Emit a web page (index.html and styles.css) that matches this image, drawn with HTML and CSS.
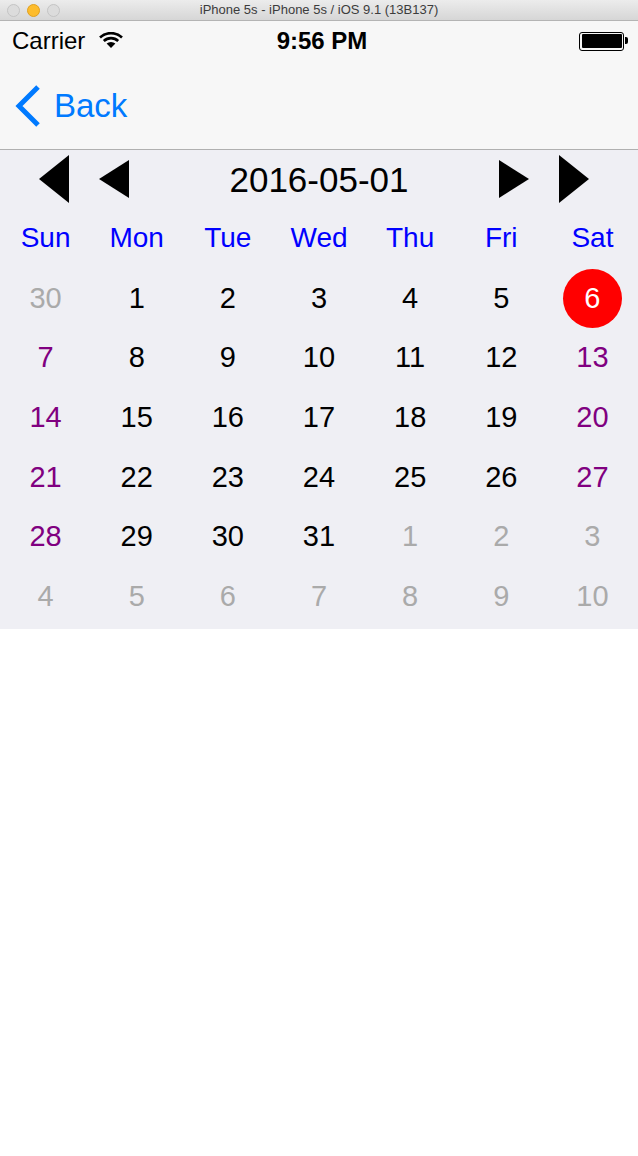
FILE: index.html
```html
<!DOCTYPE html>
<html>
<head>
<meta charset="utf-8">
<link rel="stylesheet" href="styles.css">
</head>
<body>
<div class="window">
  <div class="titlebar">
    <div class="lights">
      <span class="light"></span>
      <span class="light yellow"></span>
      <span class="light"></span>
    </div>
    <div class="title">iPhone 5s - iPhone 5s / iOS 9.1 (13B137)</div>
  </div>
  <div class="statusbar">
    <div class="carrier">
      <span>Carrier</span>
      <svg class="wifi" width="24" height="16" viewBox="0 0 24 16">
        <path d="M1 5.5 A16 16 0 0 1 23 5.5" fill="none" stroke="#000" stroke-width="2.6"/>
        <path d="M4.8 9 A10.5 10.5 0 0 1 19.2 9" fill="none" stroke="#000" stroke-width="2.6"/>
        <path d="M12 16 L7.6 11.6 A6.5 6.5 0 0 1 16.4 11.6 Z" fill="#000"/>
      </svg>
    </div>
    <div class="time">9:56 PM</div>
    <div class="battery"><span class="battery-fill"></span><span class="battery-tip"></span></div>
  </div>
  <div class="navbar">
    <div class="back">
      <svg class="chevron" width="28" height="42" viewBox="0 0 28 42">
        <path d="M24 2 L5 21 L24 40" fill="none" stroke="#007aff" stroke-width="5"/>
      </svg>
      <span>Back</span>
    </div>
  </div>
  <div class="calendar">
    <div class="cal-head">
      <span class="tri left big"></span>
      <span class="tri left small"></span>
      <div class="month">2016-05-01</div>
      <span class="tri right small"></span>
      <span class="tri right big"></span>
    </div>
    <div class="grid">
      <div class="wd">Sun</div><div class="wd">Mon</div><div class="wd">Tue</div><div class="wd">Wed</div><div class="wd">Thu</div><div class="wd">Fri</div><div class="wd">Sat</div>

      <div class="day other">30</div><div class="day">1</div><div class="day">2</div><div class="day">3</div><div class="day">4</div><div class="day">5</div><div class="day sel"><span class="circle">6</span></div>

      <div class="day wk">7</div><div class="day">8</div><div class="day">9</div><div class="day">10</div><div class="day">11</div><div class="day">12</div><div class="day wk">13</div>

      <div class="day wk">14</div><div class="day">15</div><div class="day">16</div><div class="day">17</div><div class="day">18</div><div class="day">19</div><div class="day wk">20</div>

      <div class="day wk">21</div><div class="day">22</div><div class="day">23</div><div class="day">24</div><div class="day">25</div><div class="day">26</div><div class="day wk">27</div>

      <div class="day wk">28</div><div class="day">29</div><div class="day">30</div><div class="day">31</div><div class="day other">1</div><div class="day other">2</div><div class="day other">3</div>

      <div class="day other">4</div><div class="day other">5</div><div class="day other">6</div><div class="day other">7</div><div class="day other">8</div><div class="day other">9</div><div class="day other">10</div>
    </div>
  </div>
</div>
</body>
</html>
```

FILE: styles.css
```css
* { box-sizing: border-box; }
html, body { margin: 0; padding: 0; background: #fff; }
body { font-family: "Liberation Sans", Arial, sans-serif; width: 638px; height: 1156px; overflow: hidden; }

.titlebar {
  height: 21px;
  background: linear-gradient(#ececec, #d6d6d6);
  border-bottom: 1px solid #b4b4b4;
  display: flex;
  align-items: center;
  position: relative;
}
.lights { display: flex; gap: 7px; padding-left: 7px; }
.light {
  width: 13px; height: 13px; border-radius: 50%;
  background: #dcdcdc; border: 1px solid #c4c4c4;
}
.light.yellow { background: #fdbc2c; border-color: #e0a020; }
.title {
  position: absolute; left: 0; right: 0; top: 2px;
  text-align: center; font-size: 13px; color: #3c3c3c;
  font-family: "Liberation Sans", Arial, sans-serif;
}

.statusbar {
  height: 40px;
  background: #f7f7f7;
  display: flex;
  align-items: center;
  justify-content: space-between;
  padding: 0 10px 0 12px;
  position: relative;
}
.carrier { display: flex; align-items: center; gap: 14px; font-size: 24px; color: #000; }
.wifi { margin-top: -2px; }
.time {
  position: absolute; left: 0; right: 0; text-align: center;
  font-size: 24px; font-weight: bold; padding-left: 6px;
}
.battery {
  width: 45px; height: 19px; border: 1.5px solid #000; border-radius: 3px;
  padding: 1.5px; position: relative; margin-right: 4px;
}
.battery-fill { display: block; width: 100%; height: 100%; background: #000; border-radius: 1px; }
.battery-tip {
  position: absolute; right: -5px; top: 4.5px; width: 3px; height: 7px;
  background: #000; border-radius: 0 2px 2px 0;
}

.navbar {
  height: 89px;
  background: #f7f7f7;
  border-bottom: 1px solid #b0b0b0;
  display: flex;
  align-items: center;
  padding-left: 14px;
}
.back { display: flex; align-items: center; gap: 12px; color: #007aff; font-size: 33px; margin-top: 2px; }
.chevron { display: block; }

.calendar { background: #efeff4; padding-bottom: 4px; }
.cal-head {
  height: 58px;
  display: flex;
  align-items: center;
  padding: 0 49px 0 39px;
  gap: 30px;
}
.tri { width: 0; height: 0; flex: none; }
.tri.left.big { border-top: 24.5px solid transparent; border-bottom: 24.5px solid transparent; border-right: 30px solid #000; }
.tri.left.small { border-top: 19.5px solid transparent; border-bottom: 19.5px solid transparent; border-right: 30px solid #000; }
.tri.right.big { border-top: 24.5px solid transparent; border-bottom: 24.5px solid transparent; border-left: 30px solid #000; }
.tri.right.small { border-top: 19.5px solid transparent; border-bottom: 19.5px solid transparent; border-left: 30px solid #000; }
.month {
  flex: 1; text-align: center; font-size: 35px; color: #000;
  margin: 0 -30px; padding-left: 10px; margin-top: 2px;
}

.grid {
  display: grid;
  grid-template-columns: repeat(7, 1fr);
  grid-auto-rows: 59.6px;
}
.wd, .day {
  display: flex; align-items: center; justify-content: center;
  font-size: 29px;
}
.wd { color: #0000ff; font-size: 28px; }
.day { color: #000; padding-top: 2px; }
.day.other { color: #aaaaaa; }
.day.wk { color: #800080; }
.circle {
  width: 59px; height: 59px; border-radius: 50%;
  background: #ff0000; color: #fff;
  display: flex; align-items: center; justify-content: center;
}
```
